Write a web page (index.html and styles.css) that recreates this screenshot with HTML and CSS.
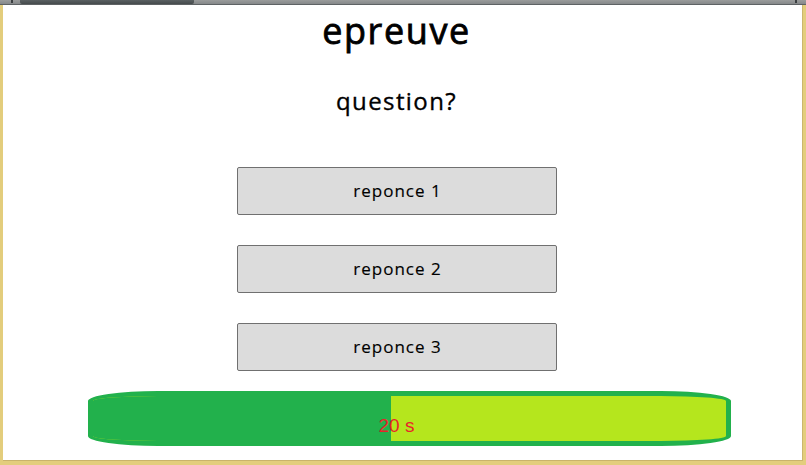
FILE: index.html
```html
<!DOCTYPE html>
<html lang="fr">
<head>
<meta charset="utf-8">
<title>epreuve</title>
<link rel="stylesheet" href="styles.css">
</head>
<body>
<div class="window">
  <div class="hscroll">
    <span class="arrow arrow-left"></span>
    <div class="track"><div class="thumb"></div></div>
    <span class="arrow arrow-right"></span>
  </div>
  <div class="frame">
    <main class="page">
      <h1 class="title">epreuve</h1>
      <p class="question">question?</p>
      <div class="answers">
        <button class="answer">reponce 1</button>
        <button class="answer">reponce 2</button>
        <button class="answer">reponce 3</button>
      </div>
      <div class="timer">
        <div class="timer-fill" style="width: 298px"></div>
        <span class="timer-label">20 s</span>
      </div>
    </main>
  </div>
</div>
</body>
</html>
```
FILE: styles.css
```css
html, body {
  margin: 0;
  padding: 0;
}
body {
  width: 806px;
  height: 465px;
  overflow: hidden;
  background: #e3cd7c;
}
.window {
  display: flex;
  flex-direction: column;
  height: 465px;
}
.hscroll {
  height: 5px;
  display: flex;
  align-items: stretch;
  background: linear-gradient(#9a9c9c, #85888a);
  border-bottom: 1px solid #5e6264;
  box-sizing: border-box;
}
.arrow {
  width: 20px;
  flex: none;
  position: relative;
}
.arrow-left::after, .arrow-right::after {
  content: "";
  position: absolute;
  top: 0;
  width: 2px;
  height: 3px;
  background: #3b3f41;
}
.arrow-left::after { left: 11px; }
.arrow-right::after { right: 9px; }
.track {
  flex: 1;
  display: flex;
}
.thumb {
  width: 174px;
  height: 4px;
  background: linear-gradient(#5a6062, #454a4c);
  border-radius: 0 0 2px 2px;
}
.frame {
  flex: 1;
  display: flex;
  padding: 0 3px 4px 3px;
}
.page {
  flex: 1;
  background: #ffffff;
  border-right: 1px solid #cbb66e;
  border-bottom: 1px solid #c9b36c;
  display: flex;
  flex-direction: column;
  align-items: center;
  font-family: "Open Sans", "DejaVu Sans", sans-serif;
  color: #000;
  padding-top: 6px;
  padding-right: 12px;
}
.title {
  margin: 0;
  font-size: 36px;
  line-height: 40px;
  font-weight: 400;
  letter-spacing: 1.6px;
  -webkit-text-stroke: 0.8px #000;
}
.question {
  margin: 35px 0 0 0;
  font-size: 24px;
  line-height: 30px;
  font-weight: 400;
  letter-spacing: 1.4px;
  -webkit-text-stroke: 0.35px #000;
}
.answers {
  margin-top: 51px;
  display: flex;
  flex-direction: column;
  gap: 30px;
}
.answer {
  width: 320px;
  height: 48px;
  margin: 0;
  padding: 0 0 2px 2px;
  background: #dcdcdc;
  border: 1px solid #707070;
  border-radius: 2px;
  font-family: "Open Sans", "DejaVu Sans", sans-serif;
  font-size: 17px;
  font-weight: 400;
  color: #000;
  letter-spacing: 1px;
  -webkit-text-stroke: 0.15px #000;
}
.timer {
  position: relative;
  margin-top: 20px;
  margin-left: 25px;
  width: 643px;
  height: 55px;
  box-sizing: border-box;
  border: 5px solid #22b14c;
  border-radius: 70px / 10px;
  background: #b5e61d;
  overflow: hidden;
}
.timer-fill {
  height: 100%;
  background: #22b14c;
}
.timer-label {
  position: absolute;
  left: 286px;
  top: 19px;
  font-family: "Liberation Sans", Arial, sans-serif;
  font-size: 19px;
  line-height: 22px;
  color: #e8242a;
}
```
